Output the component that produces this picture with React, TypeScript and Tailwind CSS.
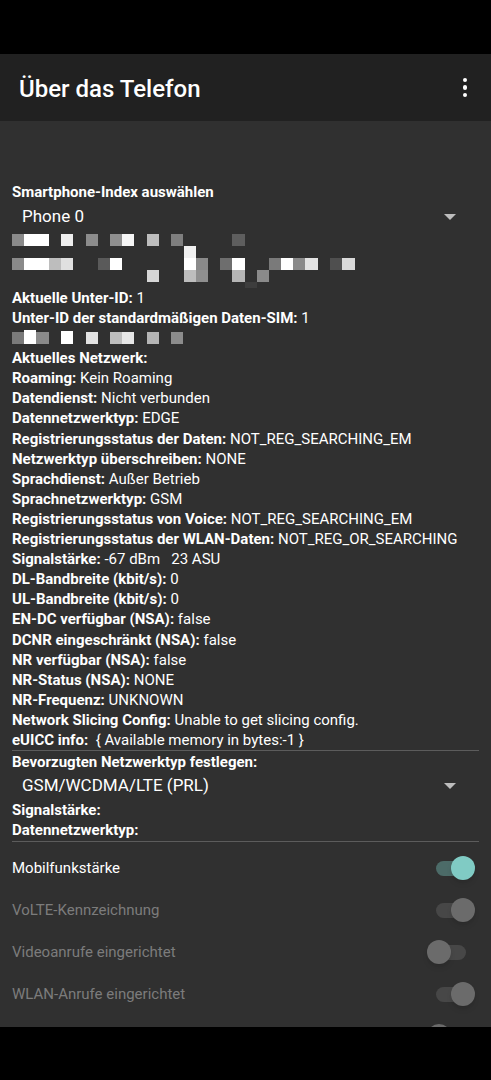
const rows: [string, string][] = [
  ["Roaming:", "Kein Roaming"],
  ["Datendienst:", "Nicht verbunden"],
  ["Datennetzwerktyp:", "EDGE"],
  ["Registrierungsstatus der Daten:", "NOT_REG_SEARCHING_EM"],
  ["Netzwerktyp überschreiben:", "NONE"],
  ["Sprachdienst:", "Außer Betrieb"],
  ["Sprachnetzwerktyp:", "GSM"],
  ["Registrierungsstatus von Voice:", "NOT_REG_SEARCHING_EM"],
  ["Registrierungsstatus der WLAN-Daten:", "NOT_REG_OR_SEARCHING"],
  ["Signalstärke:", "-67 dBm\u00a0\u00a0\u00a023 ASU"],
  ["DL-Bandbreite (kbit/s):", "0"],
  ["UL-Bandbreite (kbit/s):", "0"],
  ["EN-DC verfügbar (NSA):", "false"],
  ["DCNR eingeschränkt (NSA):", "false"],
  ["NR verfügbar (NSA):", "false"],
  ["NR-Status (NSA):", "NONE"],
  ["NR-Frequenz:", "UNKNOWN"],
  ["Network Slicing Config:", "Unable to get slicing config."],
  ["eUICC info:", "\u00a0{ Available memory in bytes:-1 }"],
];

// [x, y, w, h, colour] for the blurred-out blocks
const mosaicTop: [number, number, number, number, string][] = [
  [12, 2, 12, 12, "#8a8a8a"],
  [24, 2, 25, 12, "#ffffff"],
  [61, 2, 12, 12, "#eeeeee"],
  [86, 2, 12, 12, "#8c8c8c"],
  [110, 2, 12, 12, "#8f8f8f"],
  [122, 2, 12, 12, "#f5f5f5"],
  [147, 2, 12, 12, "#bdbdbd"],
  [171, 2, 12, 12, "#7f7f7f"],
  [232, 2, 13, 12, "#5e5e5e"],
  [12, 26, 12, 12, "#8a8a8a"],
  [24, 26, 25, 12, "#ffffff"],
  [49, 26, 12, 12, "#bdbdbd"],
  [61, 26, 12, 12, "#e0e0e0"],
  [98, 26, 12, 12, "#5a5a5a"],
  [110, 26, 12, 12, "#ffffff"],
  [184, 14, 12, 12, "#f0f0f0"],
  [184, 26, 12, 12, "#ffffff"],
  [196, 26, 12, 12, "#8a8a8a"],
  [220, 26, 12, 12, "#6e6e6e"],
  [232, 26, 13, 12, "#ffffff"],
  [269, 26, 12, 12, "#7a7a7a"],
  [281, 26, 12, 12, "#ffffff"],
  [293, 26, 12, 12, "#8a8a8a"],
  [305, 26, 13, 12, "#e3e3e3"],
  [330, 26, 12, 12, "#4f4f4f"],
  [342, 26, 13, 12, "#d9d9d9"],
  [147, 38, 12, 12, "#d6d6d6"],
  [184, 38, 12, 12, "#bdbdbd"],
  [196, 38, 12, 12, "#8f8f8f"],
  [232, 38, 13, 12, "#b5b5b5"],
  [257, 38, 12, 12, "#8a8a8a"],
  [245, 50, 12, 6, "#3d3d3d"],
];

const mosaicLine: [number, number, number, number, string][] = [
  [12, 4, 12, 12, "#7a7a7a"],
  [24, 2, 12, 14, "#ffffff"],
  [36, 4, 13, 12, "#8a8a8a"],
  [61, 3, 12, 13, "#ffffff"],
  [86, 4, 12, 12, "#e3e3e3"],
  [110, 4, 12, 12, "#bdbdbd"],
  [122, 4, 12, 12, "#e6e6e6"],
  [147, 4, 12, 12, "#b5b5b5"],
  [171, 4, 12, 12, "#8c8c8c"],
];

const Mosaic = ({
  blocks,
  height,
}: {
  blocks: [number, number, number, number, string][];
  height: number;
}) => (
  <svg width="491" height={height} className="block -mx-3">
    {blocks.map(([x, y, w, h, c], i) => (
      <rect key={i} x={x} y={y} width={w} height={h} fill={c} />
    ))}
  </svg>
);

const Caret = () => (
  <svg width="12" height="7" viewBox="0 0 12 7">
    <path d="M0 0h12L6 6z" fill="#bdbdbd" />
  </svg>
);

const Toggle = ({ on, enabled }: { on: boolean; enabled: boolean }) => (
  <div className="relative w-[48px] h-[24px] flex items-center">
    <div
      className={`ml-[9px] w-[30px] h-[15px] rounded-full ${
        on && enabled ? "bg-[#4c6b68]" : "bg-[#474747]"
      }`}
    />
    <div
      className={`absolute top-0 w-[24px] h-[24px] rounded-full shadow-md ${
        on ? "left-[24px]" : "left-0"
      } ${on && enabled ? "bg-[#80cbc4]" : "bg-[#6b6b6b]"}`}
    />
  </div>
);

const switches = [
  { label: "Mobilfunkstärke", on: true, enabled: true },
  { label: "VoLTE-Kennzeichnung", on: true, enabled: false },
  { label: "Videoanrufe eingerichtet", on: false, enabled: false },
  { label: "WLAN-Anrufe eingerichtet", on: true, enabled: false },
  { label: "", on: false, enabled: false },
];

export default function App() {
  return (
    <div
      className="w-[491px] h-[1080px] bg-black flex flex-col overflow-hidden text-white"
      style={{ fontFamily: "Roboto, 'Noto Sans', sans-serif" }}
    >
      <div className="h-[54px] bg-black shrink-0" />
      <div className="h-[67px] bg-[#212121] shrink-0 flex items-center justify-between pl-[19px] pr-[24px] pt-[3px]">
        <h1 className="text-[24px] font-medium">Über das Telefon</h1>
        <div className="flex flex-col gap-[3px] items-center -mt-[3px]">
          <span className="w-[4.5px] h-[4.5px] rounded-full bg-white" />
          <span className="w-[4.5px] h-[4.5px] rounded-full bg-white" />
          <span className="w-[4.5px] h-[4.5px] rounded-full bg-white" />
        </div>
      </div>

      <div className="h-[906px] bg-[#303030] overflow-hidden px-3 pt-[61px]">
        <div className="text-[15px] leading-[20px] font-bold">Smartphone-Index auswählen</div>
        <div className="h-[30px] flex items-center justify-between pl-[10px] pr-[23px]">
          <span className="text-[17px]">Phone 0</span>
          <Caret />
        </div>
        <Mosaic blocks={mosaicTop} height={56} />

        <div className="text-[15px] leading-[20.1px]">
          <div>
            <span className="font-bold">Aktuelle Unter-ID:</span> 1
          </div>
          <div>
            <span className="font-bold">Unter-ID der standardmäßigen Daten-SIM:</span> 1
          </div>
          <Mosaic blocks={mosaicLine} height={20} />
          <div className="font-bold">Aktuelles Netzwerk:</div>
          {rows.map(([k, v]) => (
            <div key={k} className="whitespace-nowrap">
              <span className="font-bold">{k}</span> {v}
            </div>
          ))}
        </div>

        <div className="h-px bg-[#5c5c5c]" />
        <div className="text-[15px] leading-[20px] font-bold mt-[1px]">
          Bevorzugten Netzwerktyp festlegen:
        </div>
        <div className="h-[28px] flex items-center justify-between pl-[10px] pr-[23px]">
          <span className="text-[17px]">GSM/WCDMA/LTE (PRL)</span>
          <Caret />
        </div>
        <div className="text-[15px] leading-[20px] font-bold">Signalstärke:</div>
        <div className="text-[15px] leading-[20px] font-bold">Datennetzwerktyp:</div>
        <div className="h-px bg-[#5c5c5c] mt-[1px]" />

        <div className="pt-[5px]">
          {switches.map((s, i) => (
            <div key={i} className="h-[42px] flex items-center justify-between pr-[4px]">
              <span
                className={`text-[15px] ${s.enabled ? "text-white" : "text-[#7c7c7c]"}`}
              >
                {s.label}
              </span>
              <Toggle on={s.on} enabled={s.enabled} />
            </div>
          ))}
        </div>
      </div>
      <div className="flex-1 bg-black" />
    </div>
  );
}
